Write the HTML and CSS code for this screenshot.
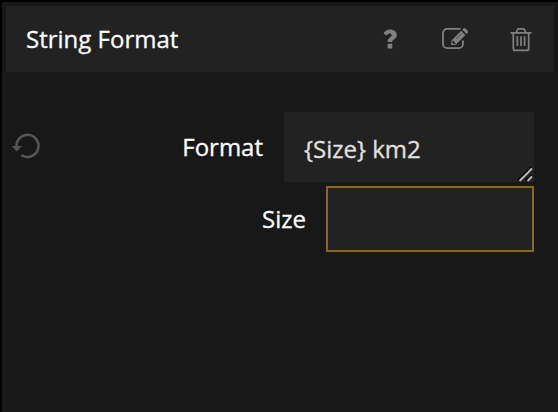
FILE: index.html
```html
<!DOCTYPE html>
<html lang="en">
<head>
<meta charset="utf-8">
<title>String Format</title>
<link rel="stylesheet" href="styles.css">
</head>
<body>
<main class="panel">
  <header class="header">
    <h1 class="title">String Format</h1>
    <svg class="icon help" viewBox="0 0 16 22"><path d="M1.500 5.600C3 2.700 5 1.500 8 1.500c4 0 6.800 2.200 6.800 5.400 0 4.200-4.500 4.300-4.600 7H5.600c-.1-4.200 4.100-4.600 4.100-6.800 0-1-.8-1.700-1.900-1.700-1.400 0-2.200.8-3.200 2.200zM5.600 15.700h4.700v4.700H5.600z" fill="currentColor"/></svg>
    <svg class="icon edit" viewBox="0 0 28 24"><path d="M19.500 3.100A4 4 0 0 0 18 2.900H6.200a4.200 4.200 0 0 0-4.200 4.200v10.800a4.200 4.200 0 0 0 4.200 4.200h11.500a4.200 4.200 0 0 0 4.200-4.200v-3.300" fill="none" stroke="currentColor" stroke-width="1.800"/><path d="M10.300 14.700 20.200 4.800l4.200 4.200-9.900 9.900h-4.200zM21.300 3.700l1.200-1.200q1-1 2 0l2.200 2.200q1 1 0 2l-1.200 1.200z" fill="currentColor"/><path d="M11.900 14.800l2.600 2.600-.7.600h-1.200v-1.300h-1.200v-1.200zM15.300 12.800l5.600-5.600" fill="#222" stroke="#222" stroke-width=".5"/></svg>
    <svg class="icon trash" viewBox="0 0 24 26"><path d="M1.500 6.800h21M4.300 7v15.400q0 2 2 2h11.400q2 0 2-2V7M7.200 6.500l1.300-2.900q.3-.8 1.200-.8h4.600q.9 0 1.200.8l1.300 2.900M8.400 10.200v9.900M12 10.200v9.900M15.600 10.200v9.900" fill="none" stroke="currentColor" stroke-width="1.700"/></svg>
  </header>
  <form class="form">
    <svg class="reset" viewBox="0 0 30 28"><path d="M5.500 14.500A11 11 0 1 1 10.400 23.100" fill="none" stroke="currentColor" stroke-width="2.600"/><path d="M.6 14h10.300l-5.100 5.400z" fill="currentColor"/></svg>
    <label class="label format-label" for="format">Format</label>
    <div class="area">
      <textarea class="field" id="format" rows="1" spellcheck="false">{Size} km2</textarea>
      <svg class="grip" viewBox="0 0 16 16"><path d="M1.500 14.500 14.500 1.500M9.500 14.500l5-5" stroke="#000" stroke-width="2.800"/><path d="M2.500 15 15 2.500M10.500 15l4.500-4.500" stroke="#bbb" stroke-width="1.900"/></svg>
    </div>
    <label class="label size-label" for="size">Size</label>
    <input class="size" id="size" type="text">
  </form>
</main>
</body>
</html>
```
FILE: styles.css
```css
* { box-sizing: border-box; }
body {
  margin: 0;
  height: 412px;
  padding: 2px 0 0 2px;
  background: #000;
  color: #fff;
  font: 24px/32px "Open Sans", sans-serif;
  -webkit-text-stroke: 0.3px currentColor;
  overflow: hidden;
}
.panel {
  height: 410px;
  padding: 4px 4px 0;
  background: #181818;
}
.header {
  display: flex;
  align-items: center;
  height: 66px;
  padding: 0 21px 0 20px;
  background: #222;
  color: #808080;
}
.title {
  margin: 0 auto 0 0;
  color: #fff;
  font-size: 24px;
  font-weight: 400;
}
.icon { display: block; flex: none; }
.help { width: 16px; height: 22px; margin-right: 43.5px; }
.edit { width: 28px; height: 24px; margin: 0 40px 2px 0; }
.trash { width: 24px; height: 26px; }
.form {
  display: grid;
  grid-template-columns: 30px 1fr 42px 208px;
  grid-template-rows: 70px 66px;
  row-gap: 4px;
  align-items: center;
  padding: 40px 20px 0 6px;
}
.reset {
  width: 30px;
  height: 28px;
  margin: 0 0 2px -1px;
  color: #555;
}
.label {
  padding-right: 20px;
  text-align: right;
}
.format-label { padding-right: 21px; }
.area {
  position: relative;
  grid-column: 3 / 5;
  height: 70px;
}
.field {
  display: block;
  width: 100%;
  height: 100%;
  margin: 0;
  padding: 21px 20px 0;
  border: 0;
  background: #222;
  color: #e0e0e0;
  font: inherit;
  resize: none;
  overflow: hidden;
}
.grip {
  position: absolute;
  right: 1px;
  bottom: 0;
  width: 16px;
  height: 16px;
}
.size-label { grid-column: 1 / 4; }
.size {
  width: 208px;
  height: 66px;
  margin: 0;
  padding: 0 18px;
  border: 2px solid #8c6523;
  background: #222;
  color: #e0e0e0;
  font: inherit;
}
```
